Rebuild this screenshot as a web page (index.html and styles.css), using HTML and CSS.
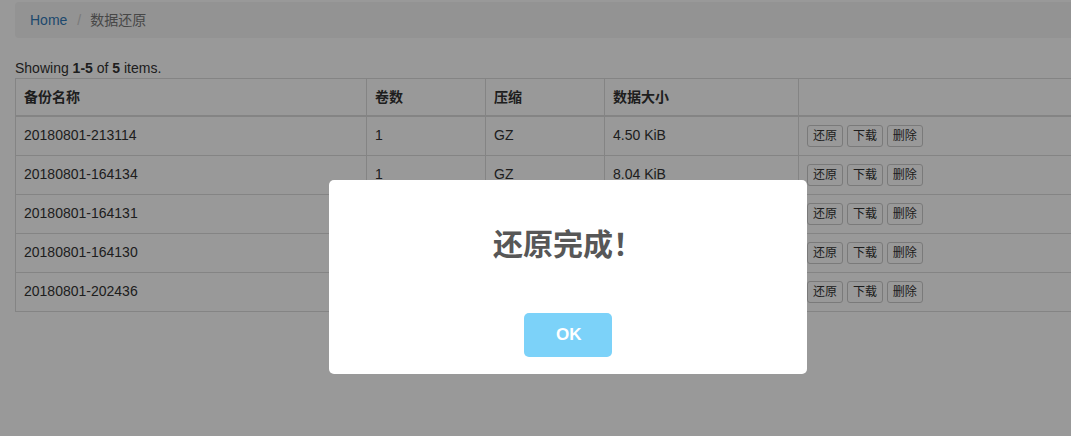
FILE: index.html
```html
<!DOCTYPE html>
<html lang="zh-CN">
<head>
<meta charset="utf-8">
<title>数据还原</title>
<link rel="stylesheet" href="styles.css">
</head>
<body>
<div class="page">
  <ul class="breadcrumb">
    <li><a href="#">Home</a></li>
    <li class="active">数据还原</li>
  </ul>
  <div class="summary">Showing <b>1-5</b> of <b>5</b> items.</div>
  <table class="grid">
    <colgroup>
      <col class="c-name"><col class="c-vol"><col class="c-zip"><col class="c-size"><col class="c-act">
    </colgroup>
    <thead>
      <tr><th>备份名称</th><th>卷数</th><th>压缩</th><th>数据大小</th><th></th></tr>
    </thead>
    <tbody>
      <tr><td>20180801-213114</td><td>1</td><td>GZ</td><td>4.50 KiB</td><td><span class="btn">还原</span> <span class="btn">下载</span> <span class="btn">删除</span></td></tr>
      <tr><td>20180801-164134</td><td>1</td><td>GZ</td><td>8.04 KiB</td><td><span class="btn">还原</span> <span class="btn">下载</span> <span class="btn">删除</span></td></tr>
      <tr><td>20180801-164131</td><td>1</td><td>GZ</td><td>8.04 KiB</td><td><span class="btn">还原</span> <span class="btn">下载</span> <span class="btn">删除</span></td></tr>
      <tr><td>20180801-164130</td><td>1</td><td>GZ</td><td>8.04 KiB</td><td><span class="btn">还原</span> <span class="btn">下载</span> <span class="btn">删除</span></td></tr>
      <tr><td>20180801-202436</td><td>1</td><td>GZ</td><td>8.04 KiB</td><td><span class="btn">还原</span> <span class="btn">下载</span> <span class="btn">删除</span></td></tr>
    </tbody>
  </table>
</div>
<div class="overlay"></div>
<div class="alert">
  <h2 class="alert-title">还原完成！</h2>
  <div class="alert-buttons"><button class="alert-ok">OK</button></div>
</div>
</body>
</html>
```

FILE: styles.css
```css
html, body {
  margin: 0;
  padding: 0;
  overflow: hidden;
  height: 436px;
  background: #fff;
}
body {
  font-family: "Liberation Sans", Arial, "Noto Sans CJK SC", sans-serif;
  font-size: 14px;
  line-height: 20px;
  color: #333;
}
.page {
  width: 1110px;
  padding: 2px 15px 0;
}
.breadcrumb {
  list-style: none;
  margin: 0 0 20px;
  padding: 8px 15px;
  background: #f5f5f5;
  border-radius: 4px;
  display: flex;
}
.breadcrumb li + li::before {
  content: "/";
  color: #ccc;
  margin-left: 5px;
  padding: 0 9px 0 5px;
}
.breadcrumb a {
  color: #337ab7;
  text-decoration: none;
}
.breadcrumb .active {
  color: #777;
}
.summary {
  height: 20px;
}
.grid {
  width: 100%;
  border-collapse: collapse;
  border: 1px solid #ddd;
  table-layout: fixed;
}
.c-name { width: 351px; }
.c-vol { width: 119px; }
.c-zip { width: 119px; }
.c-size { width: 194px; }
.grid th, .grid td {
  border: 1px solid #ddd;
  padding: 8px;
  text-align: left;
  vertical-align: top;
  line-height: 20px;
}
.grid th {
  font-weight: bold;
  border-bottom: 2px solid #ddd;
  padding-bottom: 8px;
}
.grid td {
  height: 22px;
}
.btn {
  display: inline-block;
  padding: 1px 5px;
  font-size: 12px;
  line-height: 18px;
  border: 1px solid #ccc;
  border-radius: 3px;
  background: #fff;
  color: #333;
}
.overlay {
  position: fixed;
  inset: 0;
  background: rgba(0, 0, 0, 0.4);
}
.alert {
  position: absolute;
  left: 329px;
  top: 180px;
  width: 478px;
  padding: 17px 0;
  background: #fff;
  border-radius: 5px;
  text-align: center;
  font-family: "Liberation Sans", Arial, "Noto Sans CJK SC", sans-serif;
}
.alert-title {
  margin: 25px 0;
  font-size: 30px;
  line-height: 40px;
  font-weight: 700;
  color: #575757;
  font-family: "Noto Sans CJK SC", sans-serif;
}
.alert-buttons {
  display: flex;
  justify-content: center;
}
.alert-ok {
  margin: 26px 5px 0;
  padding: 10px 32px;
  width: 88px;
  border: none;
  border-radius: 5px;
  background: #7cd2f9;
  color: #fff;
  font-family: "Liberation Sans", Arial, sans-serif;
  font-size: 17px;
  line-height: 24px;
  font-weight: 700;
}
```
